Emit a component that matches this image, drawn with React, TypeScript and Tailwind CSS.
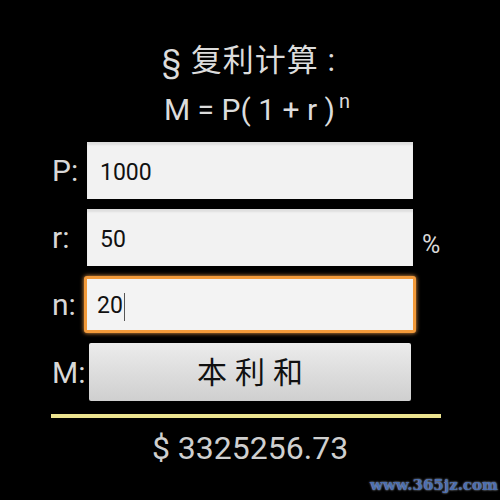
import React from "react";

const font = { fontFamily: "Roboto, 'Noto Sans CJK SC', sans-serif" };

function Field({ value, focused }: { value: string; focused?: boolean }) {
  if (focused) {
    return (
      <div className="w-[332px] h-[57px] -mx-[3px] rounded-[3px] border-[3px] border-[#f29a3a] bg-[#f3f3f3] shadow-[0_0_4px_#f5a04a] flex items-center pl-[10px] pt-[4px]">
        <span className="text-[23px] text-[#111]">{value}</span>
        <span className="w-px h-[28px] bg-[#555] ml-[1px]" />
      </div>
    );
  }
  return (
    <div className="w-[326px] h-[57px] bg-[#f2f2f2] border-t border-[#ddd] shadow-[inset_0_2px_2px_rgba(0,0,0,0.08)] flex items-center pl-[13px] pt-[5px]">
      <span className="text-[23px] text-[#111]">{value}</span>
    </div>
  );
}

export default function App() {
  return (
    <div className="w-[500px] h-[500px] bg-black relative overflow-hidden" style={font}>
      <div className="flex flex-col items-center pt-[40px] text-[#dcdcdc]">
        <div className="text-[31px] leading-[42px] tracking-[1px] ml-[-2px]">§ 复利计算 :</div>
        <div className="text-[30px] leading-[40px] mt-[8px] ml-[14px] flex items-start">
          <span>M = P( 1 + r )</span>
          <span className="text-[20px] leading-[20px] ml-[4px] mt-[1px]">n</span>
        </div>
      </div>

      <div className="flex flex-col gap-[10px] mt-[12px] pl-[52px] text-[#d8d8d8]">
        <div className="flex items-center">
          <span className="w-[35px] text-[30px]">P:</span>
          <Field value="1000" />
        </div>
        <div className="flex items-center">
          <span className="w-[35px] text-[30px]">r:</span>
          <Field value="50" />
          <span className="ml-[9px] mt-[14px] text-[25px]">%</span>
        </div>
        <div className="flex items-center">
          <span className="w-[35px] text-[30px]">n:</span>
          <Field value="20" focused />
        </div>
        <div className="flex items-center">
          <span className="w-[37px] text-[30px]">M:</span>
          <button className="w-[322px] h-[58px] rounded-[2px] bg-gradient-to-b from-[#ececec] to-[#cfcfcf] text-[30px] text-[#111] tracking-[8px] pl-[8px]">
            本利和
          </button>
        </div>
      </div>

      <div className="mx-[51px] w-[390px] h-[4px] bg-[#ece390] mt-[13px]" />

      <div className="text-center text-[32px] text-[#cfcfcf] mt-[6px]">$ 3325256.73</div>

      <div
        className="absolute right-[2px] bottom-[4px] text-[15px] font-bold text-[#4a6fb0]"
        style={{ fontFamily: "'DejaVu Serif', serif", textShadow: "0 0 2px #cfd8ea" }}
      >
        www.365jz.com
      </div>
    </div>
  );
}
